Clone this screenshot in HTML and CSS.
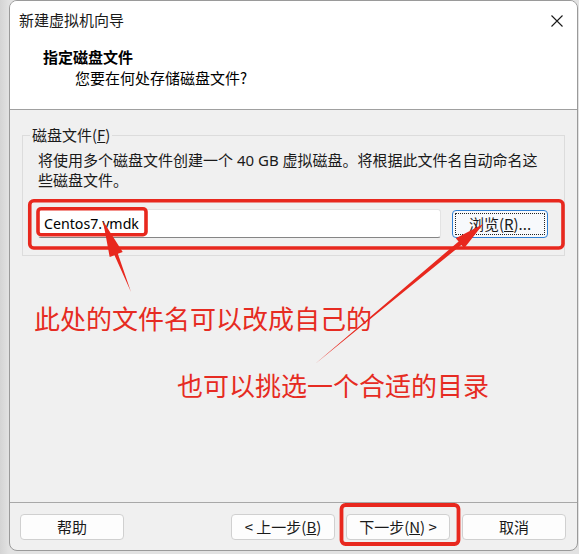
FILE: index.html
```html
<!DOCTYPE html>
<html lang="zh-CN">
<head>
<meta charset="utf-8">
<title>新建虚拟机向导</title>
<link rel="stylesheet" href="styles.css">
</head>
<body>
<div class="window">
  <div class="titlebar">
    <span class="title">新建虚拟机向导</span>
    <svg class="close" width="12" height="12" viewBox="0 0 12 12"><path d="M0.5 0.5 L11.5 11.5 M11.5 0.5 L0.5 11.5" stroke="#1a1a1a" stroke-width="1.1" fill="none"/></svg>
  </div>
  <div class="header">
    <div class="h-title">指定磁盘文件</div>
    <div class="h-sub">您要在何处存储磁盘文件?</div>
  </div>
  <div class="content">
    <fieldset class="group">
      <legend>磁盘文件(<u>F</u>)</legend>
      <p class="desc">将使用多个磁盘文件创建一个 40 GB 虚拟磁盘。将根据此文件名自动命名这<br>些磁盘文件。</p>
      <div class="row">
        <div class="input">Centos7.vmdk</div>
        <button class="btn browse"><span class="focus">浏览(<u>R</u>)...</span></button>
      </div>
    </fieldset>
  </div>
  <div class="footer">
    <button class="btn">帮助</button>
    <div class="spacer"></div>
    <button class="btn">&lt; 上一步(<u>B</u>)</button>
    <button class="btn next">下一步(<u>N</u>) &gt;</button>
    <button class="btn cancel">取消</button>
  </div>
</div>

<div class="annot">
  <svg class="annot-svg" width="579" height="554" viewBox="0 0 579 554">
    <rect x="29.75" y="200.75" width="533.25" height="47.25" rx="4" fill="none" stroke="#e8281e" stroke-width="3.6"/>
    <rect x="38" y="208.7" width="108" height="26" rx="3" fill="none" stroke="#e8281e" stroke-width="3.6"/>
    <rect x="341.5" y="505" width="117" height="39" rx="4" fill="none" stroke="#e8281e" stroke-width="3.8"/>
    <polygon points="103,221 122.7,251.9 117.9,253.8 131,292 114.5,255.2 109.7,257.1" fill="#e8281e"/>
    <polygon points="483.3,224 464.2,248.2 461.4,244.9 315,364 458.6,241.5 455.8,238.2" fill="#e8281e"/>
  </svg>
  <div class="note note1">此处的文件名可以改成自己的</div>
  <div class="note note2">也可以挑选一个合适的目录</div>
</div>
</body>
</html>
```

FILE: styles.css
```css
* { box-sizing: border-box; }

html, body {
  margin: 0;
  padding: 0;
}

body {
  position: relative;
  width: 579px;
  height: 554px;
  overflow: hidden;
  background: linear-gradient(to right, #d4d4d4 0px, #e2e2e2 9px, #e2e2e2 100%);
  font-family: "Noto Sans", "Noto Sans CJK SC", sans-serif;
  font-size: 15px;
  color: #1a1a1a;
}

.window {
  margin-left: 9px;
  width: 569px;
  height: 551px;
  border: 1px solid #9a9a9a;
  border-radius: 8px;
  overflow: hidden;
  background: #f0f0f0;
  display: flex;
  flex-direction: column;
}

.titlebar {
  height: 38px;
  flex: none;
  background: #ffffff;
  display: flex;
  align-items: center;
  justify-content: space-between;
  padding: 0 14px 0 9px;
}

.title {
  font-family: "Noto Sans CJK SC", sans-serif;
  font-size: 15px;
  line-height: 20px;
  color: #1a1a1a;
}

.close { display: block; margin-top: 1px; }

.header {
  flex: none;
  background: #ffffff;
  border-bottom: 1px solid #a0a0a0;
  padding: 8px 0 21px 0;
}

.h-title {
  padding-left: 33px;
  font-family: "Noto Sans CJK SC", sans-serif;
  font-weight: bold;
  font-size: 15px;
  line-height: 20px;
  color: #000;
}

.h-sub {
  padding-left: 65px;
  margin-top: 1px;
  font-family: "Noto Sans CJK SC", sans-serif;
  font-size: 15px;
  line-height: 20px;
  color: #000;
}

.content {
  flex: 1;
  padding-top: 15px;
}

.group {
  margin: 0 12px;
  padding: 5px 16px 17px 15px;
  border: 1px solid #dcdcdc;
  min-width: 0;
}

.group legend {
  margin-left: -8px;
  padding: 0 2px;
  line-height: 20px;
  font-size: 15px;
  font-family: "Noto Sans CJK SC", sans-serif;
}

.desc {
  margin: 0;
  line-height: 20px;
  white-space: nowrap;
}

.row {
  margin-top: 19px;
  display: flex;
  align-items: center;
  gap: 11px;
}

.input {
  flex: 1;
  height: 29px;
  background: #ffffff;
  border: 1px solid #e3e3e3;
  border-bottom-color: #858585;
  border-radius: 3px;
  padding-left: 5px;
  line-height: 27px;
  font-size: 14.2px;
  color: #000;
}

.btn {
  width: 104px;
  height: 26px;
  padding: 0;
  background: #fdfdfd;
  border: 1px solid #d0d0d0;
  border-radius: 4px;
  font-family: "Noto Sans CJK SC", sans-serif;
  font-size: 15px;
  line-height: 22px;
  color: #1a1a1a;
}

.browse {
  width: 96px;
  height: 28px;
  border-color: #2f7fd3;
  background: #f7f9fc;
  padding: 2px;
  display: flex;
}

.browse .focus {
  flex: 1;
  border: 1px dotted #222;
  border-radius: 1px;
  line-height: 20px;
  text-align: center;
}

.footer {
  flex: none;
  border-top: 1px solid #a8a8a8;
  padding: 11px 11px 10px 10px;
  display: flex;
  align-items: center;
}

.spacer { flex: 1; }

.next { margin-left: 11px; }
.cancel { margin-left: 12px; }

.annot {
  position: absolute;
  left: 0;
  top: 0;
  width: 579px;
  height: 554px;
  pointer-events: none;
}

.annot-svg {
  position: absolute;
  left: 0;
  top: 0;
}

.note {
  position: absolute;
  font-family: "Noto Sans CJK SC", sans-serif;
  font-size: 26px;
  line-height: 30px;
  color: #e62b22;
  white-space: nowrap;
}

.note1 { left: 34px; top: 303px; }
.note2 { left: 177px; top: 370px; }
```
